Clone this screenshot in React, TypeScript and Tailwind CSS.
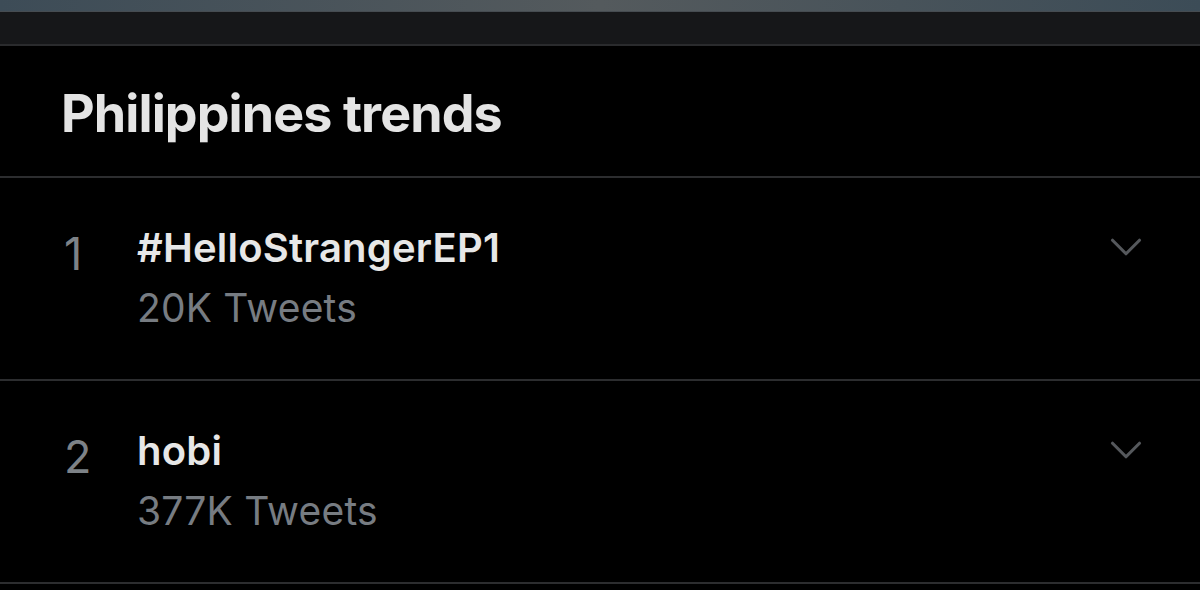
import { ChevronDown } from "lucide-react";

const trends = [
  { rank: 1, name: "#HelloStrangerEP1", count: "20K Tweets" },
  { rank: 2, name: "hobi", count: "377K Tweets" },
];

function TrendRow({ rank, name, count }: { rank: number; name: string; count: string }) {
  return (
    <div className="flex h-[203px] border-b-2 border-[#2c2d2f]">
      <div className="w-[137px] pl-[64px] pt-[53px] text-[45px] leading-none font-normal text-[#7d8287]">
        {rank}
      </div>
      <div className="flex-1 pt-[50px]">
        <div className="text-[40px] leading-[40px] font-semibold text-[#e7e7e7] tracking-[0.2px]">{name}</div>
        <div className="mt-[20px] text-[39px] leading-[40px] text-[#777c82] tracking-[0.2px]">{count}</div>
      </div>
      <div className="pr-[47px] pt-[42px]">
        <ChevronDown size={54} strokeWidth={1.4} className="text-[#55585c]" />
      </div>
    </div>
  );
}

export default function App() {
  return (
    <div
      className="w-[1200px] h-[590px] overflow-hidden bg-black"
      style={{ fontFamily: "Inter, 'Noto Sans', sans-serif" }}
    >
      <div className="h-[11px] bg-gradient-to-r from-[#3d4c57] via-[#545a5d] to-[#3c4c57]" />
      <div className="h-[35px] bg-[#161719] border-t border-[#464c51] border-b-2 border-b-[#2a2b2d]" />
      <div className="h-[132px] border-b-2 border-[#2c2d2f] pl-[61px] pt-[42px]">
        <h1 className="text-[52px] leading-none font-bold text-[#e4e4e4] tracking-[-0.9px]">Philippines trends</h1>
      </div>
      {trends.map((t) => (
        <TrendRow key={t.rank} {...t} />
      ))}
    </div>
  );
}
